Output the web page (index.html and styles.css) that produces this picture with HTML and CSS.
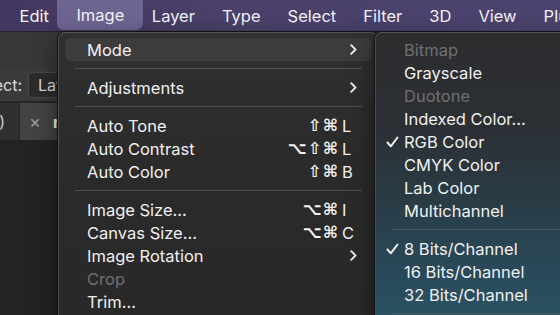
FILE: index.html
```html
<!DOCTYPE html>
<html lang="en">

<head>
    <meta charset="UTF-8">
    <meta name="viewport" content="width=device-width, initial-scale=1.0">
    <title>Image menu</title>
    <link rel="stylesheet" href="styles.css">
</head>

<body>
    <div class="screen">

        <!-- macOS menu bar -->
        <nav class="menubar">
            <span class="menubar-item">Edit</span>
            <span class="menubar-item active">Image</span>
            <span class="menubar-item">Layer</span>
            <span class="menubar-item">Type</span>
            <span class="menubar-item">Select</span>
            <span class="menubar-item">Filter</span>
            <span class="menubar-item">3D</span>
            <span class="menubar-item">View</span>
            <span class="menubar-item">Plugins</span>
        </nav>

        <!-- Photoshop workspace behind the menus -->
        <div class="workspace">
            <div class="app-bar"></div>
            <div class="options-bar">
                <span class="options-label">Auto-Select:</span>
                <span class="dropdown">Layer</span>
            </div>
            <div class="tab-bar">
                <span class="tab">photo.jpg @ 100% (RGB/8)</span>
                <span class="tab current"><span class="tab-close">×</span><span class="tab-name">rgb.psd</span></span>
            </div>
            <div class="canvas-area"></div>
        </div>

        <!-- Image menu -->
        <div class="menu image-menu">
            <div class="menu-item highlighted">
                <span class="check"></span><span class="label">Mode</span>
                <svg class="chevron" width="7" height="11" viewBox="0 0 7 11"><path d="M1.2 1.2 5.5 5.5 1.2 9.8" /></svg>
            </div>
            <div class="separator"></div>
            <div class="menu-item">
                <span class="check"></span><span class="label">Adjustments</span>
                <svg class="chevron" width="7" height="11" viewBox="0 0 7 11"><path d="M1.2 1.2 5.5 5.5 1.2 9.8" /></svg>
            </div>
            <div class="separator"></div>
            <div class="menu-item">
                <span class="check"></span><span class="label">Auto Tone</span>
                <span class="shortcut"><span class="mods">⇧⌘</span><span class="key">L</span></span>
            </div>
            <div class="menu-item">
                <span class="check"></span><span class="label">Auto Contrast</span>
                <span class="shortcut"><span class="mods">⌥⇧⌘</span><span class="key">L</span></span>
            </div>
            <div class="menu-item">
                <span class="check"></span><span class="label">Auto Color</span>
                <span class="shortcut"><span class="mods">⇧⌘</span><span class="key">B</span></span>
            </div>
            <div class="separator"></div>
            <div class="menu-item">
                <span class="check"></span><span class="label">Image Size...</span>
                <span class="shortcut"><span class="mods">⌥⌘</span><span class="key">I</span></span>
            </div>
            <div class="menu-item">
                <span class="check"></span><span class="label">Canvas Size...</span>
                <span class="shortcut"><span class="mods">⌥⌘</span><span class="key">C</span></span>
            </div>
            <div class="menu-item">
                <span class="check"></span><span class="label">Image Rotation</span>
                <svg class="chevron" width="7" height="11" viewBox="0 0 7 11"><path d="M1.2 1.2 5.5 5.5 1.2 9.8" /></svg>
            </div>
            <div class="menu-item disabled">
                <span class="check"></span><span class="label">Crop</span>
            </div>
            <div class="menu-item">
                <span class="check"></span><span class="label">Trim...</span>
            </div>
        </div>

        <!-- Mode submenu -->
        <div class="menu sub-menu">
            <div class="menu-item disabled"><span class="check"></span><span class="label">Bitmap</span></div>
            <div class="menu-item"><span class="check"></span><span class="label">Grayscale</span></div>
            <div class="menu-item disabled"><span class="check"></span><span class="label">Duotone</span></div>
            <div class="menu-item"><span class="check"></span><span class="label">Indexed Color...</span></div>
            <div class="menu-item">
                <span class="check"><svg width="13" height="12" viewBox="0 0 13 12"><path d="M1.5 6.5 4.8 10.3 11.5 1.5" /></svg></span>
                <span class="label">RGB Color</span>
            </div>
            <div class="menu-item"><span class="check"></span><span class="label">CMYK Color</span></div>
            <div class="menu-item"><span class="check"></span><span class="label">Lab Color</span></div>
            <div class="menu-item"><span class="check"></span><span class="label">Multichannel</span></div>
            <div class="separator"></div>
            <div class="menu-item">
                <span class="check"><svg width="13" height="12" viewBox="0 0 13 12"><path d="M1.5 6.5 4.8 10.3 11.5 1.5" /></svg></span>
                <span class="label">8 Bits/Channel</span>
            </div>
            <div class="menu-item"><span class="check"></span><span class="label">16 Bits/Channel</span></div>
            <div class="menu-item"><span class="check"></span><span class="label">32 Bits/Channel</span></div>
            <div class="separator"></div>
        </div>

    </div>
</body>

</html>
```

FILE: styles.css
```css
/* Global styles */
* {
    margin: 0;
    padding: 0;
    box-sizing: border-box;
}

body {
    font-family: "Inter", "Liberation Sans", sans-serif;
    background: #232323;
    color: #ececec;
}

.screen {
    position: relative;
    width: 560px;
    height: 315px;
    overflow: hidden;
}

/* Menu bar */
.menubar {
    display: flex;
    align-items: center;
    height: 32px;
    padding-left: 6px;
    background: linear-gradient(to right, #41375f, #4a4069 40%, #4c4470);
    border-bottom: 1px solid #22202c;
    white-space: nowrap;
}

.menubar-item {
    padding: 0 13.5px;
    font-size: 16.5px;
    color: #f4f2f8;
}

.menubar-item.active {
    line-height: 30px;
    margin: -2px -5px 0;
    padding: 0 19px;
    border-radius: 0 0 7px 7px;
    background: #6e6491;
}

/* Workspace behind the menus */
.workspace {
    display: flex;
    flex-direction: column;
    height: 283px;
}

.app-bar {
    height: 36px;
    background: #383838;
}

.options-bar {
    display: flex;
    align-items: center;
    gap: 6px;
    height: 35px;
    background: #3a3a3a;
    border-bottom: 2px solid #262626;
    font-size: 16px;
    white-space: nowrap;
}

.options-label {
    display: flex;
    justify-content: flex-end;
    width: 22px;
    color: #dcdcdc;
}

.dropdown {
    padding: 2px 9px;
    width: 80px;
    border: 1px solid #4a4a4a;
    border-radius: 4px;
    background: #2c2c2c;
    color: #dcdcdc;
}

.tab-bar {
    display: flex;
    height: 37px;
    background: #303030;
    font-size: 16px;
    white-space: nowrap;
}

.tab {
    display: flex;
    align-items: center;
    justify-content: flex-end;
    width: 20px;
    padding-right: 14px;
    color: #cfcfcf;
    border-right: 1px solid #262626;
}

.tab.current {
    justify-content: flex-start;
    width: auto;
    gap: 12px;
    padding-left: 9px;
    background: #434343;
}

.tab-close {
    color: #9c9c9c;
    font-size: 18px;
}

.tab-name {
    font-weight: 700;
    color: #f0f0f0;
}

.canvas-area {
    flex: 1;
    background: #232323;
}

/* Menus */
.menu {
    position: absolute;
    top: 32px;
    padding: 5px 6px;
    border: 1px solid #4e4e4e;
    border-top-color: #555;
    border-radius: 7px;
    box-shadow: 0 0 0 1px #111, 0 8px 24px rgba(0, 0, 0, 0.5);
    font-size: 16.5px;
}

.image-menu {
    left: 58px;
    width: 320px;
    height: 300px;
    background: linear-gradient(#303030, #2a2a2a 50%, #292929);
}

.sub-menu {
    left: 375px;
    width: 220px;
    height: 300px;
    z-index: 1;
    background: linear-gradient(#2d2d2f 0%, #2b2f34 30%, #2a3b44 55%, #29495a 80%, #2a5566 100%);
}

.menu-item {
    display: flex;
    align-items: center;
    height: 23px;
    padding-right: 13px;
    border-radius: 5px;
    color: #f0f0f0;
    white-space: nowrap;
}

.menu-item.highlighted {
    background: #3c3c3d;
}

.menu-item.disabled {
    color: #707070;
}

.check {
    display: flex;
    align-items: center;
    justify-content: flex-end;
    width: 22px;
    padding-right: 5px;
    flex-shrink: 0;
}

.check path,
.chevron path {
    fill: none;
    stroke: #f0f0f0;
    stroke-width: 2;
    stroke-linecap: round;
    stroke-linejoin: round;
}

.chevron path {
    stroke-width: 1.8;
}

.label {
    flex: 1;
}

.chevron {
    margin-right: 1px;
}

.shortcut {
    display: flex;
    align-items: center;
    margin-right: 3px;
}

.mods {
    font-family: "DejaVu Sans", sans-serif;
    font-size: 16.5px;
    font-weight: 700;
    letter-spacing: 1px;
}

.key {
    width: 16px;
    padding-left: 3px;
}

.separator {
    height: 15px;
    margin: 0 9px 0 10px;
    display: flex;
    align-items: center;
}

.separator::after {
    content: "";
    flex: 1;
    height: 1px;
    background: #4f4f4f;
}

.sub-menu .separator::after {
    background: #4c5a60;
}
```
